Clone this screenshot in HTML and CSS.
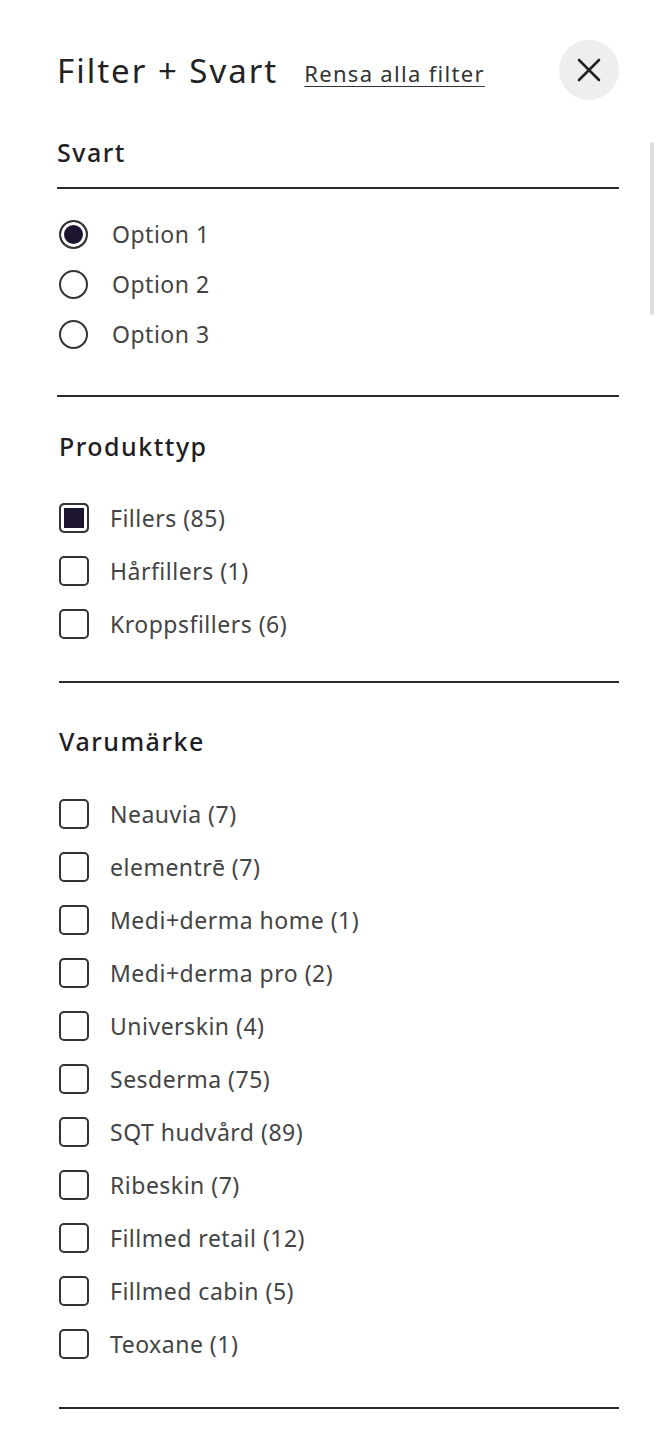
FILE: index.html
```html
<!DOCTYPE html>
<html lang="sv">
<head>
    <meta charset="UTF-8">
    <meta name="viewport" content="width=device-width, initial-scale=1.0">
    <title>Filter</title>
    <link rel="stylesheet" href="styles.css">
</head>
<body>
    <div class="panel">
        <div class="header">
            <h1 class="title">Filter + Svart</h1>
            <a href="#" class="clear">Rensa alla filter</a>
            <button class="close" aria-label="Stäng">
                <svg width="24" height="24" viewBox="0 0 24 24" fill="none" stroke="#222" stroke-width="2.6" stroke-linecap="round">
                    <path d="M2 2 L22 22 M22 2 L2 22"/>
                </svg>
            </button>
        </div>

        <form class="filters">
            <section class="group group-first">
                <h2 class="group-title">Svart</h2>
                <div class="options radios">
                    <label class="option"><input type="radio" name="svart" checked><span>Option 1</span></label>
                    <label class="option"><input type="radio" name="svart"><span>Option 2</span></label>
                    <label class="option"><input type="radio" name="svart"><span>Option 3</span></label>
                </div>
            </section>

            <section class="group group-type">
                <h2 class="group-title">Produkttyp</h2>
                <div class="options">
                    <label class="option"><input type="checkbox" checked><span>Fillers (85)</span></label>
                    <label class="option"><input type="checkbox"><span>Hårfillers (1)</span></label>
                    <label class="option"><input type="checkbox"><span>Kroppsfillers (6)</span></label>
                </div>
            </section>

            <section class="group group-brand">
                <h2 class="group-title">Varumärke</h2>
                <div class="options">
                    <label class="option"><input type="checkbox"><span>Neauvia (7)</span></label>
                    <label class="option"><input type="checkbox"><span>elementrē (7)</span></label>
                    <label class="option"><input type="checkbox"><span>Medi+derma home (1)</span></label>
                    <label class="option"><input type="checkbox"><span>Medi+derma pro (2)</span></label>
                    <label class="option"><input type="checkbox"><span>Universkin (4)</span></label>
                    <label class="option"><input type="checkbox"><span>Sesderma (75)</span></label>
                    <label class="option"><input type="checkbox"><span>SQT hudvård (89)</span></label>
                    <label class="option"><input type="checkbox"><span>Ribeskin (7)</span></label>
                    <label class="option"><input type="checkbox"><span>Fillmed retail (12)</span></label>
                    <label class="option"><input type="checkbox"><span>Fillmed cabin (5)</span></label>
                    <label class="option"><input type="checkbox"><span>Teoxane (1)</span></label>
                </div>
            </section>
        </form>

        <div class="scroll-thumb"></div>
    </div>
</body>
</html>
```

FILE: styles.css
```css
body {
    margin: 0;
    background: #fff;
    font-family: "Noto Sans", Arial, sans-serif;
    color: #222;
}
.panel {
    position: relative;
    width: 562px;
    padding: 40px 50px 40px 57px;
}
.header {
    display: flex;
    align-items: center;
    height: 60px;
}
.title {
    margin: 0 26px 0 0;
    font-size: 33px;
    font-weight: 400;
    letter-spacing: 2px;
    color: #222;
}
.clear {
    font-size: 22px;
    color: #333;
    letter-spacing: 1.3px;
    text-decoration: underline;
    text-underline-offset: 4px;
    text-decoration-thickness: 1px;
    margin-top: 6px;
}
.close {
    margin-left: auto;
    width: 60px;
    height: 60px;
    border: none;
    border-radius: 50%;
    background: #eeeeee;
    display: flex;
    align-items: center;
    justify-content: center;
    padding: 0;
    cursor: pointer;
}
.group-title {
    margin: 0;
    font-size: 25px;
    line-height: 30px;
    font-weight: 500;
    letter-spacing: 1.5px;
    color: #1f1d24;
}
.group {
    border-bottom: 2px solid #2a2a2a;
}
.group-first .group-title {
    margin-top: 37px;
    padding-bottom: 20px;
    border-bottom: 2px solid #2a2a2a;
}
.group-first .options {
    margin: 20px 0 0 2px;
    padding-bottom: 36px;
}
.group-type,
.group-brand {
    margin-left: 2px;
}
.group-type .group-title {
    margin-top: 34px;
}
.group-type .options {
    margin-top: 30px;
    padding-bottom: 31px;
}
.group-brand .group-title {
    margin-top: 43px;
}
.group-brand .options {
    margin-top: 31px;
    padding-bottom: 37px;
}
.options {
    display: flex;
    flex-direction: column;
}
.option {
    display: flex;
    align-items: center;
    height: 53px;
    font-size: 23px;
    letter-spacing: 0.5px;
    color: #444;
    cursor: pointer;
}
.radios .option {
    height: 50px;
}
.option input {
    appearance: none;
    -webkit-appearance: none;
    margin: 0 21px 0 0;
    width: 30px;
    height: 30px;
    border: 2px solid #333;
    border-radius: 5px;
    background: #fff;
    flex-shrink: 0;
}
.option input:checked {
    background: #1d1530;
    box-shadow: inset 0 0 0 3px #fff;
}
.radios .option input {
    width: 29px;
    height: 29px;
    border-radius: 50%;
    margin-right: 24px;
}
.scroll-thumb {
    position: absolute;
    top: 142px;
    left: 650px;
    width: 4px;
    height: 173px;
    border-radius: 2px;
    background: #dddddd;
}
```
